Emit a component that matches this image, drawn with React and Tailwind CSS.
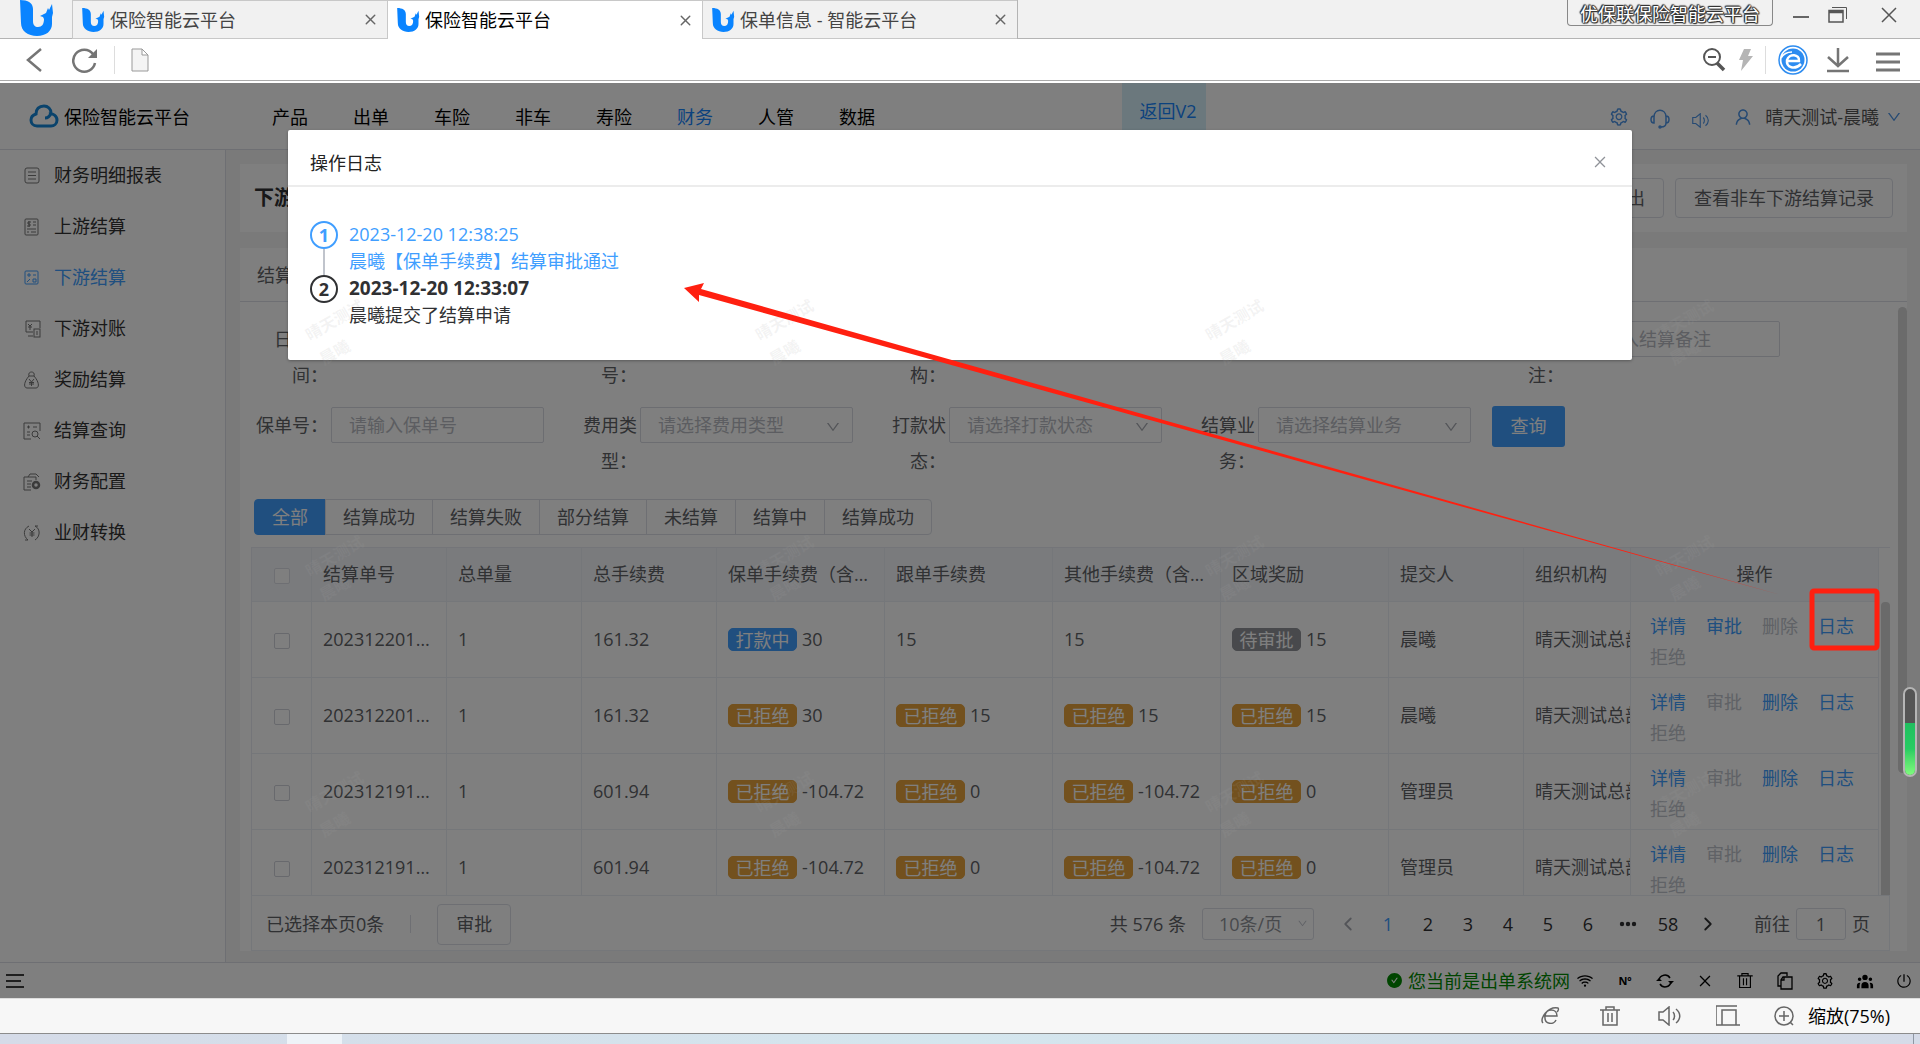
import { useState } from "react";
import {
    AiOutlineDown,
    AiOutlineSetting,
    AiOutlineUser,
    AiOutlineWifi,
    AiOutlinePoweroff,
    AiOutlineClose,
    AiFillCheckCircle,
} from "react-icons/ai";
import { FiChevronLeft, FiChevronRight, FiX } from "react-icons/fi";
import { HiUserGroup } from "react-icons/hi";

const tabs = [
    { title: "保险智能云平台", active: false },
    { title: "保险智能云平台", active: true },
    { title: "保单信息 - 智能云平台", active: false },
];

const navItems = ["产品", "出单", "车险", "非车", "寿险", "财务", "人管", "数据"];

const sideItems = [
    { label: "财务明细报表", icon: "report" },
    { label: "上游结算", icon: "up" },
    { label: "下游结算", icon: "down" },
    { label: "下游对账", icon: "check" },
    { label: "奖励结算", icon: "award" },
    { label: "结算查询", icon: "search" },
    { label: "财务配置", icon: "config" },
    { label: "业财转换", icon: "convert" },
];

const firstFields = [
    { id: "date", label: "日期时间", hint: "请选择日期时间" },
    { id: "no", label: "结算单号", hint: "请输入结算单号" },
    { id: "org", label: "组织机构", hint: "请选择组织机构" },
    { id: "user", label: "提交人", hint: "请输入提交人" },
    { id: "note", label: "结算备注", hint: "请输入结算备注" },
];

const secondFields = [
    { id: "policy", label: "保单号", hint: "请输入保单号" },
    { id: "fee", label: "费用类型", hint: "请选择费用类型", select: true },
    { id: "pay", label: "打款状态", hint: "请选择打款状态", select: true },
    { id: "biz", label: "结算业务", hint: "请选择结算业务", select: true },
];

const statuses = ["全部", "结算成功", "结算失败", "部分结算", "未结算", "结算中", "结算成功"];

const headers = [
    "结算单号",
    "总单量",
    "总手续费",
    "保单手续费（含税）",
    "跟单手续费",
    "其他手续费（含税）",
    "区域奖励",
    "提交人",
    "组织机构",
];

const rows = [
    {
        no: "20231220123307",
        total: "161.32",
        fees: [["打款中", "30"], ["", "15"], ["", "15"], ["待审批", "15"]],
        user: "晨曦",
        off: ["删除", "拒绝"],
    },
    {
        no: "20231220113015",
        total: "161.32",
        fees: [["已拒绝", "30"], ["已拒绝", "15"], ["已拒绝", "15"], ["已拒绝", "15"]],
        user: "晨曦",
        off: ["审批", "拒绝"],
    },
    {
        no: "20231219164210",
        total: "601.94",
        fees: [["已拒绝", "-104.72"], ["已拒绝", "0"], ["已拒绝", "-104.72"], ["已拒绝", "0"]],
        user: "管理员",
        off: ["审批", "拒绝"],
    },
    {
        no: "20231219153122",
        total: "601.94",
        fees: [["已拒绝", "-104.72"], ["已拒绝", "0"], ["已拒绝", "-104.72"], ["已拒绝", "0"]],
        user: "管理员",
        off: ["审批", "拒绝"],
    },
];

const tagColors = {
    打款中: "bg-[#409eff] border-[#409eff]",
    待审批: "bg-[#909399] border-[#909399]",
    已拒绝: "bg-[#e6a23c] border-[#e6a23c]",
};

const actions = ["详情", "审批", "删除", "日志", "拒绝"];

function Logo({ className }) {
    return (
        <svg viewBox="0 0 34 36" className={className} fill="#0a84ff">
            <path d="M0 0c8 0 13 3 13 9v12c0 4 2 6 5 6 4 0 6-3 6-8l-1-2-3-1 6-3 2-5 1 2 3-6 1 9-1 4v7c0 7-6 12-15 12S1 31 1 23z" />
        </svg>
    );
}

function SideIcon({ name }) {
    const paths = {
        report: (
            <>
                <rect x="2" y="1" width="14" height="15" rx="2" />
                <path d="M5 5h8M5 8.500h8M5 12h8" />
            </>
        ),
        up: (
            <>
                <rect x="2" y="1" width="13" height="16" rx="1" />
                <path d="M8 4H5v2h2v2H4M6 3v6M10 4h3M10 7h3M4 11h9M4 14h2M8 14h5" />
            </>
        ),
        down: (
            <>
                <rect x="2" y="2" width="13" height="13" rx="1" />
                <path d="M4 6h4M6 4v4M10 6h3M4 13l3-3M10 10h3v3h-3z" />
            </>
        ),
        check: (
            <>
                <path d="M10 12H3V1h14v7M5 16h5" />
                <path d="M5 4l2 2 2-2M7 6v4M5 7h4" />
                <rect x="11" y="9" width="6" height="8" />
                <path d="M13 12h2M13 14h2" />
            </>
        ),
        award: (
            <>
                <path d="M6 5c-6 7-5 12-2 12h9c3 0 4-5-2-12zM6 5c-1-3 1-4 2.500-4S12 2 11 5" />
                <path d="M6 8l2.500 3L11 8M8.500 11v4M6 11.500h5M6 13h5" />
            </>
        ),
        search: (
            <>
                <path d="M8 17H1V1h16v8M4 5h3M5.500 3.500v3M10 5h4M4 10h3M4 13h3" />
                <circle cx="12" cy="12" r="3" />
                <path d="M14 14l3 3" />
            </>
        ),
        config: (
            <>
                <path d="M8 17H1V4h12v3M5 4l2-3h6l3 3M4 8h5M4 11h4M4 14h4" />
                <circle cx="13" cy="12" r="3" strokeWidth="2.500" />
            </>
        ),
        convert: (
            <>
                <path d="M6 2c-6 3-6 10-1 14M5 16H2M12 2c6 3 5 11 0 14M12 2h3" />
                <path d="M6 5l3 3 3-3M9 8v5M6.500 9h5M6.500 11h5" />
            </>
        ),
    };

    return (
        <svg viewBox="0 0 18 18" className="size-[18px]" fill="none" stroke="currentColor" strokeWidth="1">
            {paths[name]}
        </svg>
    );
}

function TrashIcon({ className }) {
    return (
        <svg viewBox="0 0 20 22" className={className} fill="none" stroke="currentColor" strokeWidth="1.500">
            <path d="M0 5h20M6 5V2h8v3M3 5v15h14V5M8 8v9M12 8v9" />
        </svg>
    );
}

function SpeakerIcon({ className }) {
    return (
        <svg viewBox="0 0 24 20" className={className} fill="none" stroke="currentColor" strokeWidth="1.500">
            <path d="M1 6h4l6-5v18l-6-5H1zM15 6c2 2 2 6 0 8M18 3c5 4 5 10 0 14" />
        </svg>
    );
}

function BrowserTop() {
    return (
        <>
            <div className="flex h-[39px] shrink-0 items-stretch bg-[#f1f1f1] text-lg">
                <div className="w-[72px] shrink-0 border-b border-[#b4b4b4] pl-5">
                    <Logo className="h-9 w-[34px]" />
                </div>
                {tabs.map((tab, i) => (
                    <div
                        key={i}
                        className={
                            "flex w-[315px] shrink-0 items-center border-t border-l border-[#c8c8c8] pr-2 pl-[9px] " +
                            (tab.active ? "bg-white text-black" : "border-b text-[#444]")
                        }
                    >
                        <Logo className="h-6 w-[23px]" />
                        <span className="ml-[5px] flex-1">{tab.title}</span>
                        <button aria-label="关闭标签" className="text-[#666]">
                            <FiX size={17} />
                        </button>
                    </div>
                ))}
                <div className="flex flex-1 items-start justify-end border-b border-l border-[#b4b4b4]">
                    <div className="h-[26px] rounded-b border border-t-0 border-[#888] px-3 leading-[28px] text-white [text-shadow:1px_0_1px_#333,-1px_0_1px_#333,0_1px_1px_#333,0_-1px_1px_#333,1px_1px_1px_#333,-1px_-1px_1px_#333]">
                        优保联保险智能云平台
                    </div>
                    <div className="flex h-[30px] items-center gap-[19px] pr-[23px] pl-5 text-[#555]">
                        <button aria-label="最小化" className="mt-1 h-0.5 w-4 bg-[#666]" />
                        <button aria-label="还原">
                            <svg width="20" height="16" fill="none" stroke="currentColor">
                                <path d="M4 0.500h14.500V12" />
                                <path d="M1 3.500h14V15H1z" strokeWidth="1.500" />
                                <path d="M1 5h14" strokeWidth="2.500" />
                            </svg>
                        </button>
                        <button aria-label="关闭" className="ml-3.5">
                            <svg width="16" height="16" stroke="currentColor" strokeWidth="1.500">
                                <path d="M1 1l14 14M15 1L1 15" />
                            </svg>
                        </button>
                    </div>
                </div>
            </div>

            <div className="flex h-[42px] shrink-0 items-center border-b border-[#aaa] bg-white pr-5 pl-[26px] text-[#757575]">
                <button aria-label="后退">
                    <svg width="16" height="24" fill="none" stroke="currentColor" strokeWidth="2.500">
                        <path d="M15 1L2 12l13 11" />
                    </svg>
                </button>
                <button aria-label="刷新" className="ml-[30px]">
                    <svg width="26" height="26" fill="none" stroke="currentColor" strokeWidth="2.500">
                        <path d="M21 7A11 11 0 1 0 23 16" />
                        <path d="M25 2v9h-9z" fill="currentColor" stroke="none" />
                    </svg>
                </button>
                <div className="mx-4 h-7 w-px bg-[#ddd]" />
                <svg width="18" height="24" fill="#f4f4f4" stroke="#999">
                    <path d="M1 1h10l6 6v16H1zM11 1v6h6" />
                </svg>
                <div className="flex-1" />
                <svg width="24" height="24" fill="none" stroke="#555" strokeWidth="2">
                    <circle cx="10" cy="9" r="8" />
                    <path d="M6 9h8" />
                    <path d="M15 15l7 7" strokeWidth="3.500" />
                </svg>
                <svg width="14" height="24" className="ml-[13px]" fill="#b5b5b5">
                    <path d="M5 1h7L9 8h5L2 23l2-11H0z" />
                </svg>
                <div className="mx-3 h-7 w-px bg-[#ddd]" />
                <svg width="30" height="30" viewBox="0 0 30 30" fill="none">
                    <circle cx="15" cy="15" r="14" stroke="#2d8cf0" strokeWidth="1.500" />
                    <circle cx="15" cy="15" r="11.500" fill="#2d8cf0" />
                    <path d="M10 16h11c1-7-10-8-12-1-1 8 8 10 14 4" stroke="#fff" strokeWidth="2.500" />
                    <path d="M3 13c3-5 7-6 11-6" stroke="#fff" strokeWidth="1.500" />
                </svg>
                <svg width="24" height="26" className="ml-[18px]" fill="none" stroke="currentColor" strokeWidth="2.500">
                    <path d="M12 1v17M2 10l10 9 10-9M1 24h22" />
                </svg>
                <svg width="24" height="22" className="mt-1 ml-[26px]" stroke="currentColor" strokeWidth="3">
                    <path d="M0 3h24M0 11h24M0 19h24" />
                </svg>
            </div>
        </>
    );
}

function Header() {
    return (
        <header className="flex h-[67px] shrink-0 items-center border-b border-[#dcdfe6] bg-white">
            <svg width="30" height="24" viewBox="0 0 30 24" className="ml-[29px]" fill="none" stroke="#1487d8" strokeWidth="3">
                <path d="M20 10c4-1 8 2 8 6 0 4-3 6-6 6H8c-4 0-6-3-6-6 0-3 2-5 5-6 0-5 3-8 8-8 4 0 7 3 7 7-1 3-3 5-6 5" />
            </svg>
            <span className="mt-0.5 ml-[5px] text-black">保险智能云平台</span>
            <nav className="mt-0.5 ml-[82px] flex gap-[45px]">
                {navItems.map((item) => (
                    <a key={item} href="#" className={item === "财务" ? "text-[#1684fc]" : "text-black"}>
                        {item}
                    </a>
                ))}
            </nav>
            <button className="ml-[247px] h-14 w-[84px] self-start bg-[#d6f1fb] pl-2 text-[#1684fc]">返回V2</button>
            <div className="mt-0.5 ml-auto flex items-center pr-[18px] text-[#4c94e6]">
                <AiOutlineSetting size={20} />
                <svg width="20" height="20" className="mt-1 ml-[21px]" fill="none" stroke="currentColor" strokeWidth="1.500">
                    <path d="M4 8c0-9 12-9 12 0M4 7v7c-4 0-4-7 0-7zM16 7v7c4 0 4-7 0-7zM16 14c0 3-2 4-5 4" />
                    <circle cx="10" cy="18" r="1" />
                </svg>
                <SpeakerIcon className="mt-1.5 ml-[22px] h-[15px] w-[18px]" />
                <AiOutlineUser size={20} className="ml-[23px]" />
                <span className="mr-[7px] ml-3 text-[#555]">晴天测试-晨曦</span>
                <AiOutlineDown size={16} />
            </div>
        </header>
    );
}

function Sidebar() {
    return (
        <aside className="w-[226px] shrink-0 border-r border-[#dcdfe6] bg-white">
            {sideItems.map((item) => (
                <a
                    key={item.label}
                    href="#"
                    className={
                        "flex h-[51px] items-center gap-[13px] pl-[23px] " +
                        (item.icon === "down" ? "text-[#409eff]" : "text-[#333]")
                    }
                >
                    <span className={item.icon === "down" ? "" : "text-[#777]"}>
                        <SideIcon name={item.icon} />
                    </span>
                    {item.label}
                </a>
            ))}
        </aside>
    );
}

function Field({ field }) {
    const box = "h-9 w-full border border-[#d8dae2] bg-transparent rounded-xs pl-[17px]";
    return (
        <div className="flex w-[288px] items-start">
            <label htmlFor={field.id} className="w-[75px] shrink-0 pr-[3px] text-right leading-9">
                {field.label}：
            </label>
            <div className="relative flex-1">
                {field.select ? (
                    <>
                        <select id={field.id} className={box + " appearance-none text-[#b8bbc2]"}>
                            <option>{field.hint}</option>
                        </select>
                        <AiOutlineDown size={16} className="absolute top-3 right-3 text-[#a8abb2]" />
                    </>
                ) : (
                    <input id={field.id} placeholder={field.hint} className={box + " placeholder:text-[#b8bbc2]"} />
                )}
            </div>
        </div>
    );
}

function DataTable() {
    const cell = "border-r border-b border-[#ebeef5] px-[11px]";
    return (
        <div className="flex min-h-0 flex-1 overflow-hidden border-t border-l border-[#e8ebf2]">
            <table className="w-full table-fixed border-separate border-spacing-0">
                <colgroup>
                    <col className="w-[60px]" />
                    <col className="w-[135px]" />
                    <col className="w-[135px]" />
                    <col className="w-[135px]" />
                    <col className="w-[168px]" />
                    <col className="w-[168px]" />
                    <col className="w-[168px]" />
                    <col className="w-[168px]" />
                    <col className="w-[135px]" />
                    <col className="w-[107px]" />
                    <col className="w-[248px]" />
                </colgroup>
                <thead>
                    <tr className="h-[54px] bg-[#f5f7fa] text-left">
                        <th className={cell + " text-center"}>
                            <input type="checkbox" aria-label="全选" className="size-4 appearance-none rounded-xs border border-[#dcdfe6] bg-white align-middle" />
                        </th>
                        {headers.map((h) => (
                            <th key={h} className={cell + " truncate font-normal"}>
                                {h}
                            </th>
                        ))}
                        <th className={cell + " text-center font-normal"}>操作</th>
                    </tr>
                </thead>
                <tbody>
                    {rows.map((row) => (
                        <tr key={row.no} className="h-[76px]">
                            <td className={cell + " text-center"}>
                                <input type="checkbox" aria-label={row.no} className="size-4 appearance-none rounded-xs border border-[#d0d3da] align-middle" />
                            </td>
                            <td className={cell + " truncate"}>{row.no}</td>
                            <td className={cell}>1</td>
                            <td className={cell}>{row.total}</td>
                            {row.fees.map(([tag, value], i) => (
                                <td key={i} className={cell}>
                                    <div className="flex items-center gap-[5px] whitespace-nowrap">
                                        {tag && (
                                            <span className={"h-[23px] w-[69px] rounded-[5px] border text-center leading-[23px] text-white " + tagColors[tag]}>
                                                {tag}
                                            </span>
                                        )}
                                        {value}
                                    </div>
                                </td>
                            ))}
                            <td className={cell}>{row.user}</td>
                            <td className={cell + " overflow-hidden pr-0 whitespace-nowrap"}>晴天测试总部</td>
                            <td className={cell}>
                                <div className="flex flex-wrap gap-x-5 gap-y-1 pt-1 pl-2">
                                    {actions.map((a) => (
                                        <button key={a} disabled={row.off.includes(a)} className="text-[#409eff] disabled:text-[#c0c4cc]">
                                            {a}
                                        </button>
                                    ))}
                                </div>
                            </td>
                        </tr>
                    ))}
                </tbody>
            </table>
            <div className="mt-[54px] ml-0.5 w-[9px] shrink-0 rounded-t bg-[#d4d4d4]" />
        </div>
    );
}

function TableFooter() {
    return (
        <div className="flex h-14 shrink-0 items-center border border-[#ebeef5] pt-0.5 pr-[19px] pl-3.5">
            已选择本页0条
            <div className="mx-[26px] h-[18px] w-px bg-[#dcdfe6]" />
            <button className="h-[41px] rounded-[4px] border border-[#dcdfe6] px-[18px]">审批</button>
            <div className="ml-auto flex items-center">
                共 576 条
                <div className="relative mr-3.5 ml-4 text-[#909399]">
                    <select aria-label="每页条数" className="h-8 w-28 appearance-none rounded-[3px] border border-[#dcdfe6] pl-4">
                        <option>10条/页</option>
                    </select>
                    <AiOutlineDown size={11} className="absolute top-2.5 right-1.5 text-[#c0c4cc]" />
                </div>
                {["prev", "1", "2", "3", "4", "5", "6", "dots", "58", "next"].map((p) => (
                    <button
                        key={p}
                        aria-label={p}
                        className={
                            "flex w-10 items-center justify-center " +
                            (p === "1" ? "text-[#409eff]" : p === "prev" ? "text-[#a8abb2]" : "text-[#303133]")
                        }
                    >
                        {p === "prev" ? (
                            <FiChevronLeft size={22} />
                        ) : p === "next" ? (
                            <FiChevronRight size={22} />
                        ) : p === "dots" ? (
                            <svg width="18" height="6" fill="currentColor">
                                <circle cx="3" cy="3" r="2.200" />
                                <circle cx="9" cy="3" r="2.200" />
                                <circle cx="15" cy="3" r="2.200" />
                            </svg>
                        ) : (
                            p
                        )}
                    </button>
                ))}
                <label htmlFor="jump" className="mr-1.5 ml-[26px]">
                    前往
                </label>
                <input id="jump" defaultValue="1" className="mr-1.5 h-8 w-[50px] rounded-[3px] border border-[#dcdfe6] text-center" />
                页
            </div>
        </div>
    );
}

function Content() {
    const [status, setStatus] = useState(0);

    return (
        <main className="flex min-w-0 flex-1 flex-col bg-[#f4f4f4] pt-3.5 pr-[13px] pb-[11px] pl-3.5 text-[#606266]">
            <div className="flex h-[68px] shrink-0 items-center gap-[11px] bg-white pr-3.5 pl-3.5">
                <h1 className="mr-auto text-xl font-bold text-[#303133]">下游结算</h1>
                <button className="h-10 rounded-[4px] border border-[#dcdfe6] px-[18px]">导出</button>
                <button className="h-10 rounded-[4px] border border-[#dcdfe6] px-[18px]">查看非车下游结算记录</button>
            </div>

            <div className="mt-4 flex min-h-0 flex-1 flex-col bg-white">
                <div className="h-[54px] shrink-0 border-b border-[#dcdfe6] pl-[17px] leading-[54px]">结算列表</div>
                <div className="flex min-h-0 flex-1 pl-[11px]">
                    <div className="flex min-w-0 flex-1 flex-col">
                        <form className="flex flex-col gap-3.5 pt-[19px] pl-[5px]" onSubmit={(e) => e.preventDefault()}>
                            <div className="flex h-[72px] gap-[21px]">
                                {firstFields.map((f) => (
                                    <Field key={f.id} field={f} />
                                ))}
                            </div>
                            <div className="flex h-[72px] items-start gap-[21px]">
                                {secondFields.map((f) => (
                                    <Field key={f.id} field={f} />
                                ))}
                                <button className="-mt-px h-[41px] w-[73px] rounded-[3px] bg-[#409eff] text-white">查询</button>
                            </div>
                        </form>
                        <div className="mt-5 mb-3 flex pl-[3px]">
                            {statuses.map((s, i) => (
                                <button
                                    key={i}
                                    onClick={() => setStatus(i)}
                                    className={
                                        "-ml-px h-9 border px-[17px] first:ml-0 first:rounded-l-[4px] last:rounded-r-[4px] " +
                                        (status === i ? "border-[#409eff] bg-[#409eff] text-white" : "border-[#dcdfe6]")
                                    }
                                >
                                    {s}
                                </button>
                            ))}
                        </div>
                        <DataTable />
                        <TableFooter />
                    </div>
                    <div className="ml-2 w-[9px] shrink-0 pt-[5px]">
                        <div className="h-[466px] rounded-full bg-[#d6d6d6]" />
                    </div>
                </div>
            </div>
        </main>
    );
}

function AppFooter() {
    return (
        <footer className="flex h-9 shrink-0 items-center border-t border-[#dcdfe6] bg-white pr-2 pl-1.5 text-black">
            <svg width="18" height="16" stroke="currentColor" strokeWidth="1.500" className="mr-auto">
                <path d="M0 2h18M0 8h15M0 14h18" />
            </svg>
            <AiFillCheckCircle size={17} className="mr-[5px] text-[#008a00]" />
            <span className="mt-0.5 text-[#008a00]">您当前是出单系统网</span>
            <div className="ml-1.5 flex items-center gap-[22px]">
                <AiOutlineWifi size={18} />
                <span className="w-[18px] text-center text-[11px] font-bold">Nº</span>
                <svg width="18" height="18" fill="none" stroke="currentColor" strokeWidth="1.500">
                    <path d="M3 8a6 6 0 0 1 11-2M15 10a6 6 0 0 1-11 2" />
                    <path d="M0 9h6L3 6zM12 9h6l-3 3z" fill="currentColor" stroke="none" />
                </svg>
                <AiOutlineClose size={18} className="p-px" />
                <TrashIcon className="h-[17px] w-[18px]" />
                <svg width="18" height="18" fill="none" stroke="currentColor" strokeWidth="1.300">
                    <path d="M5 14H2V4l3-3h6v3M7 5h9v12H5V8z" />
                    <path d="M5 8h3V5" />
                </svg>
                <AiOutlineSetting size={18} />
                <HiUserGroup size={18} />
                <AiOutlinePoweroff size={16} />
            </div>
        </footer>
    );
}

function LogDialog() {
    return (
        <section
            role="dialog"
            aria-label="操作日志"
            className="absolute top-[47px] right-[15%] left-[15%] rounded-xs bg-white shadow-[0_1px_3px_rgba(0,0,0,0.3)]"
        >
            <div className="flex h-[57px] items-center justify-between border-b-2 border-[#ececec] pt-3 pr-6 pl-[22px] text-[#222]">
                <h2>操作日志</h2>
                <button aria-label="关闭" className="pb-1 text-[#909399]">
                    <AiOutlineClose size={16} />
                </button>
            </div>
            <ol className="px-[22px] pt-[34px] pb-[31px]">
                <li className="flex gap-[11px] text-[#409eff]">
                    <div className="flex flex-col items-center">
                        <span className="flex size-7 items-center justify-center rounded-full border-2 font-bold">1</span>
                        <span className="w-0.5 flex-1 bg-[#c0c4cc]" />
                    </div>
                    <div className="leading-[27px]">
                        <p>2023-12-20 12:38:25</p>
                        <p>晨曦【保单手续费】结算审批通过</p>
                    </div>
                </li>
                <li className="flex gap-[11px] text-[#303133]">
                    <span className="flex size-7 items-center justify-center rounded-full border-2 font-bold">2</span>
                    <div className="leading-[27px]">
                        <p className="text-[19px] font-bold">2023-12-20 12:33:07</p>
                        <p>晨曦提交了结算申请</p>
                    </div>
                </li>
            </ol>
        </section>
    );
}

// repeating user stamp, every 450 x 236 px
function Watermark() {
    const xs = [310, 760, 1210, 1660];
    const ys = [222, 458, 694];
    return (
        <div aria-hidden="true" className="pointer-events-none absolute inset-0 overflow-hidden">
            {ys.map((y) =>
                xs.map((x) => (
                    <div
                        key={x + "-" + y}
                        className="absolute w-16 -rotate-[30deg] font-['Liberation_Serif','Noto_Sans_CJK_SC',serif] text-base leading-7 font-bold text-[rgba(165,165,165,0.13)]"
                        style={{ left: x, top: y }}
                    >
                        晴天测试
                        <br />
                        晨曦
                    </div>
                ))
            )}
        </div>
    );
}

function StatusBar() {
    return (
        <>
            <div className="flex h-9 shrink-0 items-center justify-end border-t border-b border-t-[#ddd] border-b-[#8c8c8c] bg-[#f7f7f7] pr-[30px] text-[#666]">
                <svg width="20" height="20" fill="none" stroke="currentColor" strokeWidth="1.500">
                    <path d="M4 10h13c0-8-11-8-12 0-1 9 9 9 11 4M3 17C-1 13 8 0 18 2c1 1 0 3-1 4" />
                </svg>
                <TrashIcon className="ml-10 h-[22px] w-5" />
                <SpeakerIcon className="ml-[38px] h-5 w-6" />
                <svg width="24" height="22" className="ml-[34px]" fill="none" stroke="currentColor" strokeWidth="1.500">
                    <path d="M0 20V1h21M6 20V5h14v15M0 20h24" />
                </svg>
                <svg width="20" height="20" className="mr-3.5 ml-[34px]" fill="none" stroke="currentColor" strokeWidth="1.500">
                    <circle cx="10" cy="10" r="9" />
                    <path d="M5 10h10M10 5v10M16 16l3 3" />
                </svg>
                <span className="text-black">缩放(75%)</span>
            </div>
            <div className="flex h-2.5 shrink-0 bg-linear-to-r from-[#d5dbe8] via-[#d4e6ee] to-[#d5dbe8]">
                <div className="ml-[287px] w-[55px] bg-[#eef3f8]" />
                <div className="mr-1.5 ml-auto w-px bg-[#8f97a3]" />
            </div>
        </>
    );
}

export default function App() {
    return (
        <div className="relative flex h-screen flex-col overflow-hidden bg-white font-['Open_Sans','Noto_Sans_CJK_SC',sans-serif] text-lg leading-[27px]">
            <BrowserTop />
            <div className="relative mt-0.5 flex min-h-0 flex-1 flex-col">
                <Header />
                <div className="flex min-h-0 flex-1">
                    <Sidebar />
                    <Content />
                </div>
                <AppFooter />
                <div className="absolute inset-0 bg-black/50" />
                <LogDialog />
                <Watermark />
                <div className="absolute top-[604px] right-[3px] flex h-[90px] w-[14px] flex-col justify-end overflow-hidden rounded-full border-2 border-[#b5b5b5] bg-[#555]">
                    <div className="h-[52px] bg-linear-to-b from-[#1fbf5f] via-[#27cc62] to-[#7dfb7d]" />
                </div>
            </div>
            <StatusBar />

            {/* annotation: the log button and where it leads */}
            <svg className="pointer-events-none absolute top-0 left-0" width="1920" height="1044">
                <path d="M684 288L704 283L701 289L1781 595L699 295L699 302Z" fill="#ff2010" />
                <rect x="1812" y="591" width="65" height="57" rx="2" fill="none" stroke="#ff2010" strokeWidth="5" />
            </svg>
        </div>
    );
}
